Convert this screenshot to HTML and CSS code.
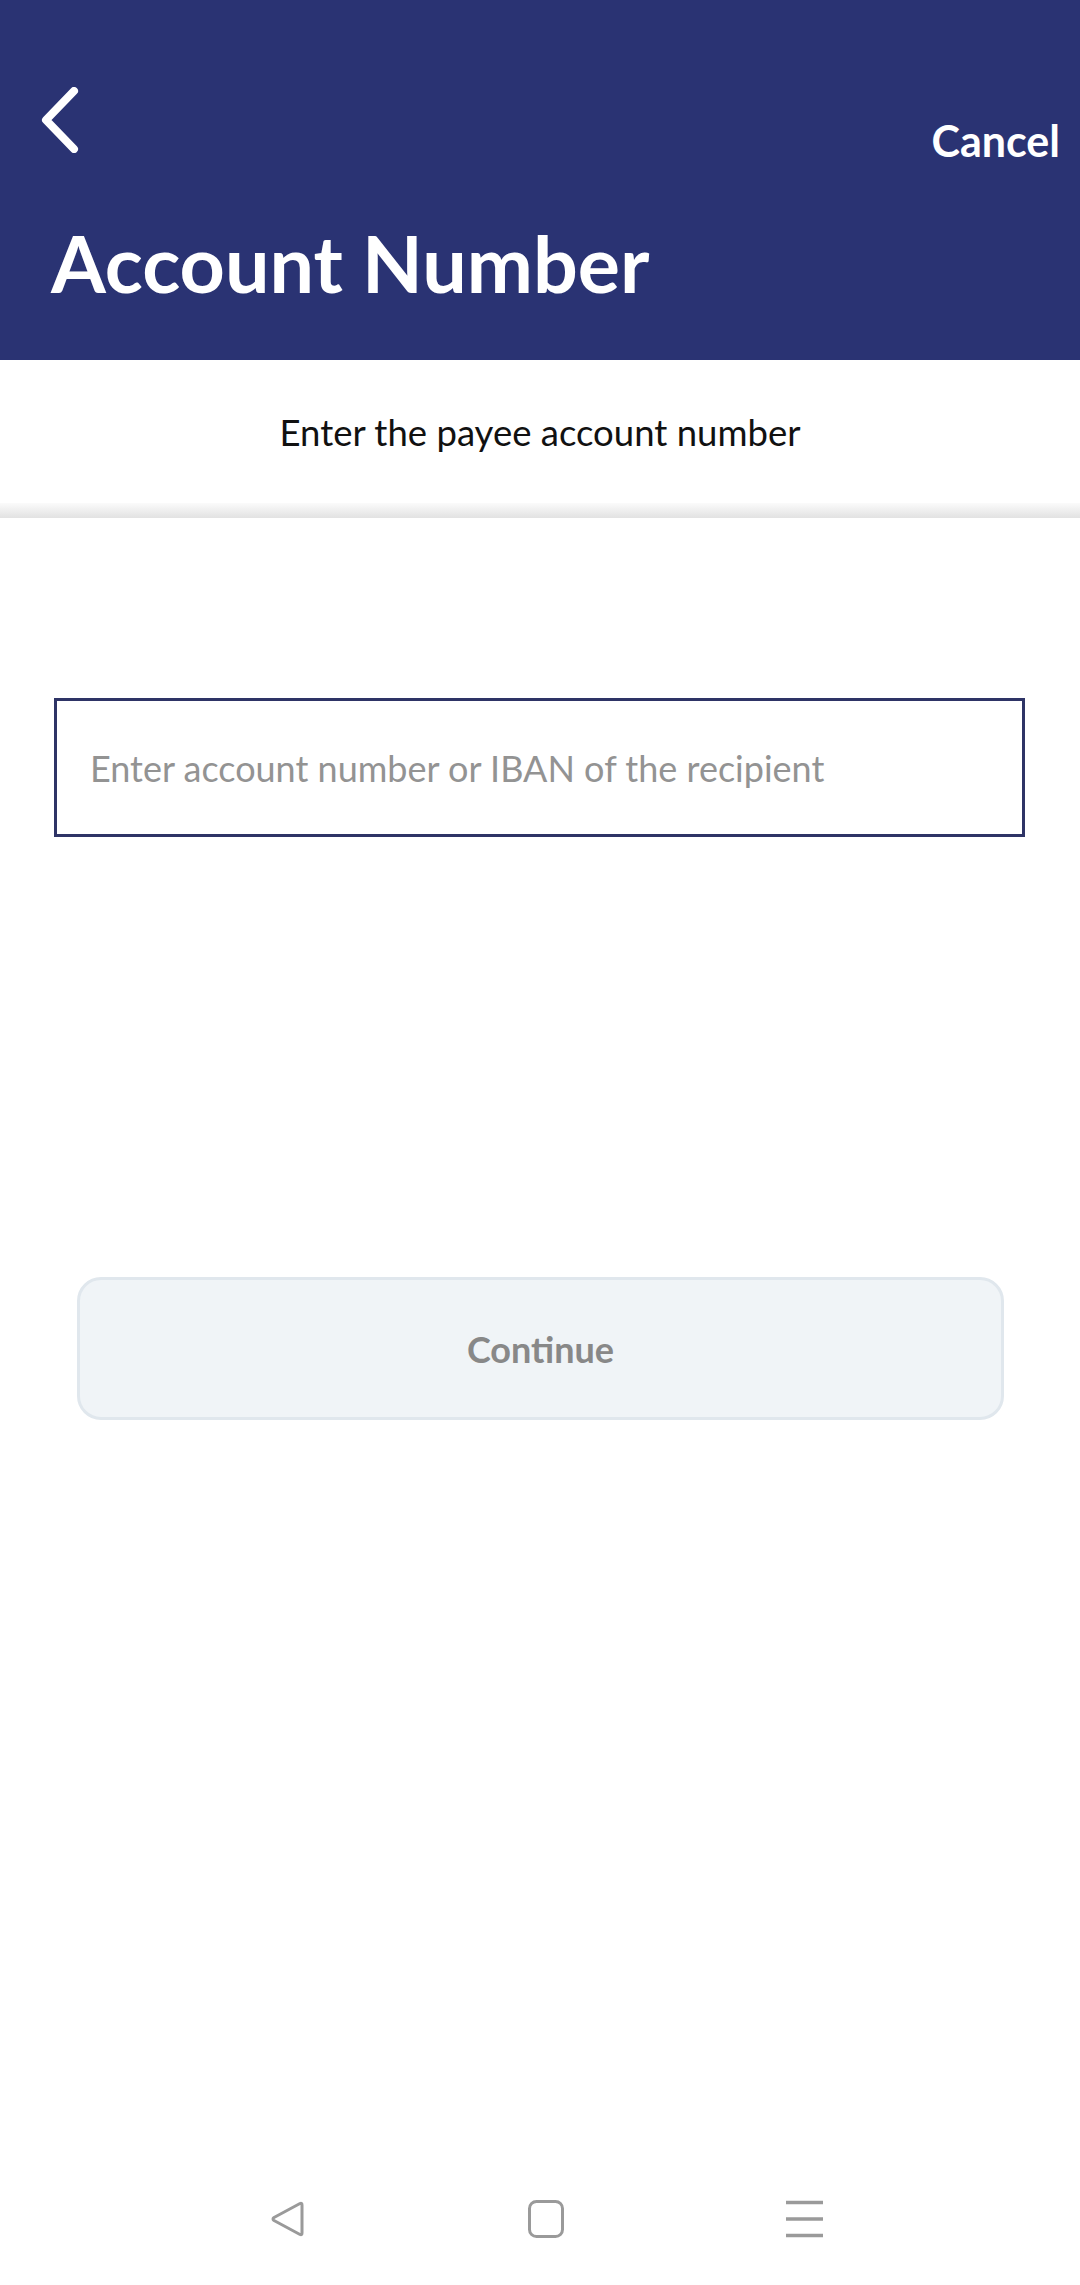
FILE: index.html
```html
<!DOCTYPE html>
<html lang="en">
<head>
<meta charset="utf-8">
<title>Account Number</title>
<link rel="stylesheet" href="styles.css">
</head>
<body>
<div class="screen">
  <header class="header">
    <div class="toolbar">
      <button class="back" aria-label="Back">
        <svg width="40" height="66" viewBox="0 0 40 66"><path d="M34 4 L6 33 L34 62" fill="none" stroke="#fff" stroke-width="8" stroke-linecap="round" stroke-linejoin="round"/></svg>
      </button>
      <span class="cancel">Cancel</span>
    </div>
    <h1 class="title">Account Number</h1>
  </header>
  <section class="intro">
    <p class="intro-text">Enter the payee account number</p>
  </section>
  <div class="shade"></div>
  <main class="content">
    <div class="field">
      <input class="field-input" type="text" placeholder="Enter account number or IBAN of the recipient">
    </div>
    <button class="continue" disabled>Continue</button>
  </main>
  <nav class="navbar">
    <svg class="nav-icon" width="40" height="40" viewBox="0 0 40 40"><path d="M33 4.5 Q35 3.5 35 6 L35 34 Q35 36.5 33 35.5 L7 21.5 Q5 20 7 18.5 Z" fill="none" stroke="#9a9a9a" stroke-width="3" stroke-linejoin="round"/></svg>
    <svg class="nav-icon" width="40" height="40" viewBox="0 0 40 40"><rect x="3.5" y="2.5" width="33" height="35" rx="7" fill="none" stroke="#9a9a9a" stroke-width="3"/></svg>
    <svg class="nav-icon" width="40" height="40" viewBox="0 0 40 40"><path d="M1 3.5 H38 M1 20 H38 M1 36.5 H38" stroke="#9a9a9a" stroke-width="3.5"/></svg>
  </nav>
</div>
</body>
</html>
```
FILE: styles.css
```css
html, body {
  margin: 0;
  padding: 0;
  background: #fff;
}
body {
  font-family: Lato, "Open Sans", sans-serif;
}
.screen {
  width: 1080px;
  height: 2285px;
  display: flex;
  flex-direction: column;
}
.header {
  background: #2a3373;
  height: 360px;
  box-sizing: border-box;
  display: flex;
  flex-direction: column;
}
.toolbar {
  height: 200px;
  display: flex;
  justify-content: space-between;
  align-items: flex-start;
  padding: 87px 20px 0 40px;
  box-sizing: border-box;
}
.back {
  background: none;
  border: 0;
  padding: 0;
  margin: 0;
  width: 40px;
  height: 66px;
  display: block;
}
.back svg { display: block; }
.cancel {
  color: #fff;
  font-weight: 700;
  font-size: 43px;
  line-height: 46px;
  margin-top: 31px;
}
.title {
  margin: 18px 0 0 51px;
  color: #fff;
  font-weight: 700;
  font-size: 79px;
  line-height: 90px;
}
.intro {
  height: 143px;
  display: flex;
  align-items: center;
  justify-content: center;
}
.intro-text {
  margin: 0;
  font-size: 36.5px;
  color: #111;
}
.shade {
  height: 15px;
  background: linear-gradient(to bottom, #fbfbfb, #e2e2e2);
}
.content {
  flex: 1;
  display: flex;
  flex-direction: column;
  padding: 180px 0 0 0;
}
.field {
  margin-left: 54px;
  width: 971px;
  height: 139px;
  box-sizing: border-box;
  border: 3px solid #2e3466;
  display: flex;
  align-items: center;
}
.field-input {
  border: 0;
  outline: none;
  background: transparent;
  width: 100%;
  height: 100%;
  padding: 0 0 0 33px;
  box-sizing: border-box;
  font-family: Lato, "Open Sans", sans-serif;
  font-size: 36px;
  color: #333;
}
.field-input::placeholder {
  color: #939393;
}
.continue {
  margin: 440px 0 0 77px;
  width: 927px;
  height: 143px;
  box-sizing: border-box;
  background: #f0f4f7;
  border: 3px solid #e0e7ed;
  border-radius: 24px;
  font-family: Lato, "Open Sans", sans-serif;
  font-weight: 700;
  font-size: 36px;
  color: #888;
}
.navbar {
  height: 132px;
  display: flex;
  justify-content: center;
  align-items: center;
  gap: 219px;
  padding-left: 12px;
}
.nav-icon { display: block; }
```
